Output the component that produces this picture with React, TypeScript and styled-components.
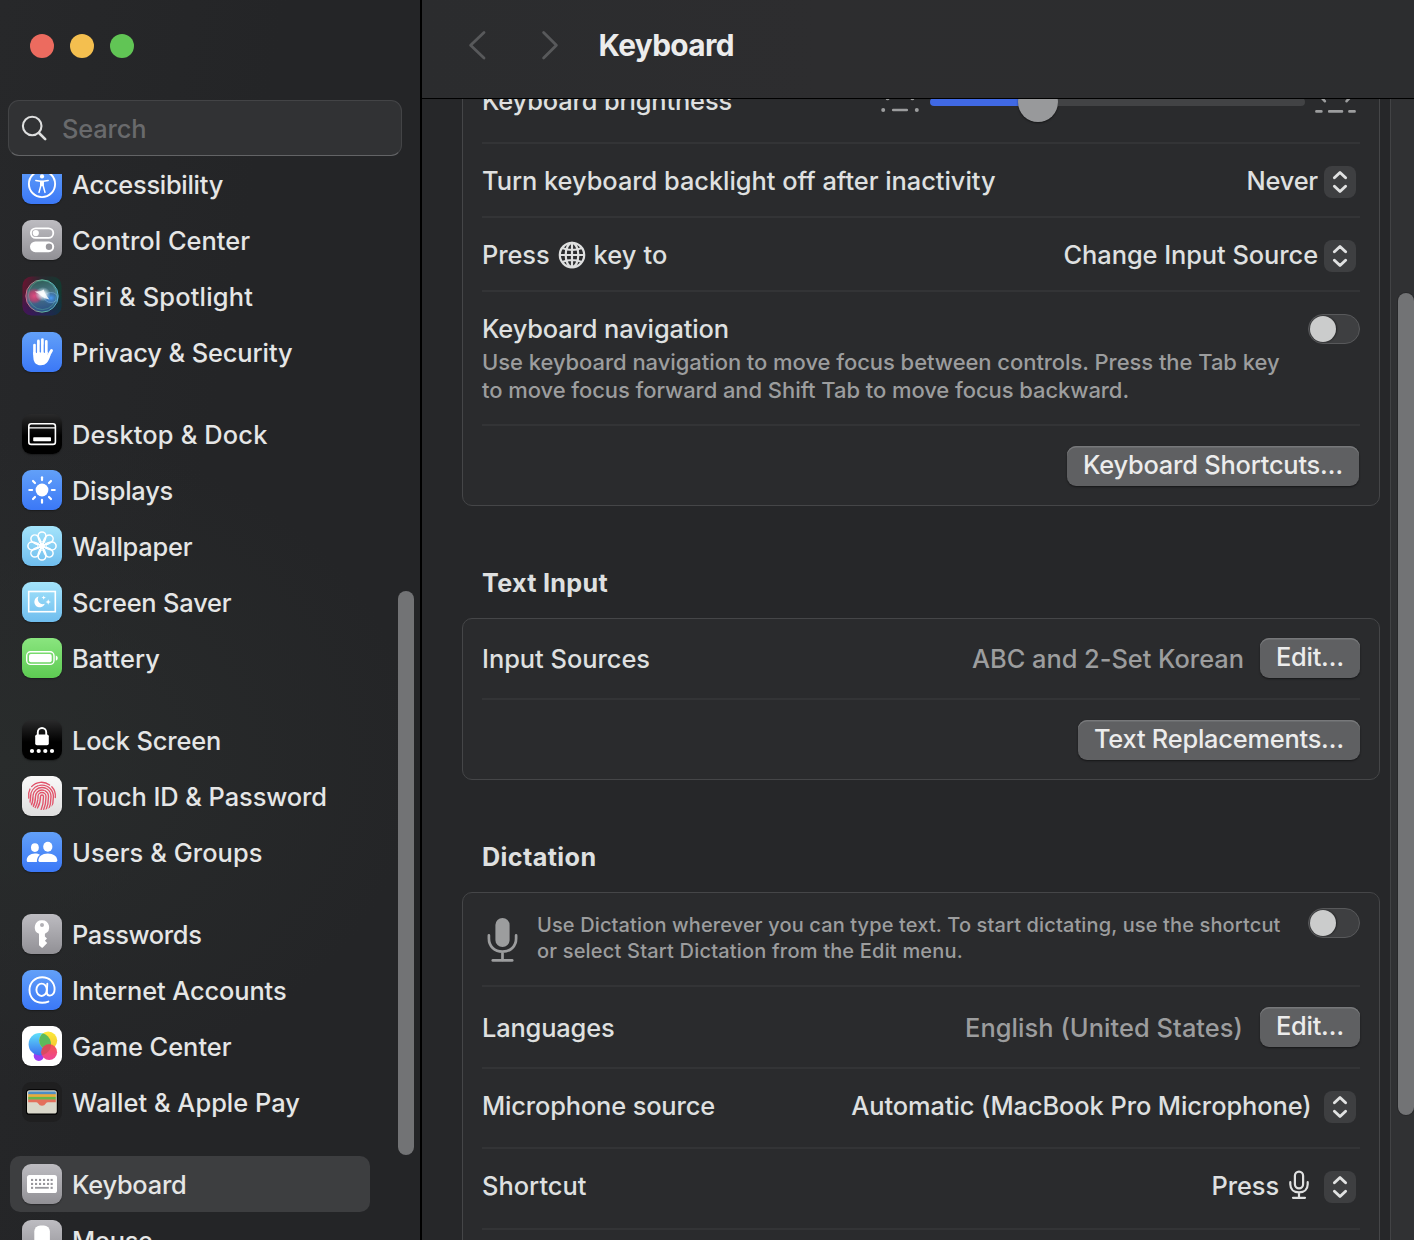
import React, { useLayoutEffect, useRef, useState } from "react";
import styled, { createGlobalStyle } from "styled-components";

const GlobalStyle = createGlobalStyle`
  * { box-sizing: border-box; }
  html, body { margin: 0; padding: 0; background: #262729; overflow: hidden; }
  body { font-family: Inter, "Liberation Sans", sans-serif; }
`;

const Window = styled.div`
  width: 1414px;
  height: 1240px;
  display: flex;
  overflow: hidden;
  background: #262729;
  color: #e1e2e2;
`;

/* ---------- text ---------- */

const TextBox = styled.span<{ $size: number; $weight: number; $color: string; $drop: number }>`
  display: block;
  flex: none;
  white-space: pre;
  font-size: ${(p) => p.$size}px;
  font-weight: ${(p) => p.$weight};
  line-height: 28px;
  color: ${(p) => p.$color};
  margin-top: ${(p) => p.$drop}px;
`;

type TextProps = {
  children: string;
  width: number;
  size?: number;
  weight?: number;
  color?: string;
  drop?: number;
};

/** A single line of text, tracked so that it spans the given width. */
function Text({ children, width, size = 25.4, weight = 480, color = "#dfe0e0", drop = 0 }: TextProps) {
  const ref = useRef<HTMLSpanElement>(null);
  const [tracking, setTracking] = useState(0);
  useLayoutEffect(() => {
    const range = document.createRange();
    range.selectNodeContents(ref.current!);
    const natural = range.getBoundingClientRect().width;
    setTracking((width - natural) / children.length);
  }, []);
  return (
    <TextBox ref={ref} $size={size} $weight={weight} $color={color} $drop={drop} style={{ letterSpacing: tracking }}>
      {children}
    </TextBox>
  );
}

/* ---------- sidebar ---------- */

const Sidebar = styled.aside`
  width: 422px;
  height: 100%;
  flex: none;
  display: flex;
  flex-direction: column;
  border-right: 2px solid #000;
  background: radial-gradient(ellipse 420px 330px at 0 760px, #292c2c 0%, rgba(41, 44, 44, 0) 100%),
    linear-gradient(100deg, #27282a 0%, #242527 45%, #242527 100%);
`;

const Lights = styled.div`
  display: flex;
  gap: 16px;
  padding: 34px 0 42px 30px;
`;

const Light = styled.span<{ $color: string }>`
  width: 24px;
  height: 24px;
  border-radius: 50%;
  background: ${(p) => p.$color};
`;

const Search = styled.div`
  flex: none;
  display: flex;
  align-items: center;
  gap: 13px;
  width: 394px;
  height: 56px;
  margin: 0 0 18px 8px;
  padding-left: 12px;
  border: 1px solid #434446;
  border-bottom-color: #636466;
  border-radius: 11px;
  background: #313234;
`;

const SidebarBody = styled.div`
  flex: 1;
  min-height: 0;
  display: flex;
  justify-content: space-between;
  overflow: hidden;
`;

const NavList = styled.nav`
  width: 360px;
  margin: -18px 0 0 10px;
  display: flex;
  flex-direction: column;
  gap: 26px;
`;

const NavGroup = styled.div`
  display: flex;
  flex-direction: column;
`;

const NavRow = styled.div<{ $active?: boolean }>`
  height: 56px;
  flex: none;
  display: flex;
  align-items: center;
  gap: 10px;
  padding-left: 12px;
  border-radius: 10px;
  background: ${(p) => (p.$active ? "#3d3e40" : "transparent")};
`;

const Tile = styled.span<{ $bg: string; $flat?: boolean }>`
  width: 40px;
  height: 40px;
  flex: none;
  display: flex;
  align-items: center;
  justify-content: center;
  overflow: hidden;
  border-radius: 9px;
  background: ${(p) => p.$bg};
  box-shadow: ${(p) => (p.$flat ? "none" : "0 1px 1.5px rgba(0, 0, 0, 0.35)")};
  & > svg { display: block; }
`;

const SidebarThumb = styled.div`
  width: 16px;
  height: 564px;
  margin: 417px 6px 0 0;
  border-radius: 8px;
  background: #727375;
`;

const Art = styled.svg.attrs({ viewBox: "0 0 40 40", width: 40, height: 40, fill: "none" })``;

const blue = "linear-gradient(#62a0f8, #3b78f7)";
const gray = "linear-gradient(#bdbcc1, #919095)";
const black = "linear-gradient(#2a2a2b, #000 55%)";
const sky = "linear-gradient(#a4e4fb, #6fbdee)";

const AccessibilityArt = () => (
  <Art stroke="#fff" strokeLinecap="round" strokeLinejoin="round">
    <circle cx="20" cy="20" r="13.1" strokeWidth="1.9" />
    <circle cx="20" cy="12.4" r="2.1" fill="#fff" stroke="none" />
    <path d="M13.8 16.4 L18.6 17.2 H21.4 L26.2 16.4" strokeWidth="1.5" />
    <path d="M21.1 17.4 V21.5 L23 28.4 M18.9 17.4 V21.5 L17 28.4" strokeWidth="1.5" />
    <path d="M18.9 17.4 H21.1 V21.6 H18.9 Z" fill="#fff" strokeWidth="1" />
  </Art>
);

const ControlCenterArt = () => (
  <Art>
    <rect x="8.9" y="8.3" width="22.4" height="9.6" rx="4.8" stroke="#fff" strokeWidth="1.8" />
    <circle cx="13.8" cy="13.1" r="3.1" fill="#fff" />
    <rect x="8" y="21.4" width="24.2" height="10.8" rx="5.4" fill="#fff" />
    <circle cx="27" cy="26.8" r="3.2" fill="#98979c" />
  </Art>
);

const SiriArt = () => (
  <Art>
    <defs>
      <linearGradient id="siriBg" x1="0" y1="0" x2="1" y2="0.25">
        <stop offset="0" stopColor="#6f1130" />
        <stop offset="0.45" stopColor="#2b2930" />
        <stop offset="1" stopColor="#133a30" />
      </linearGradient>
      <linearGradient id="siriLow" x1="0" y1="1" x2="1" y2="1">
        <stop offset="0" stopColor="#451260" />
        <stop offset="1" stopColor="#12304a" />
      </linearGradient>
      <linearGradient id="siriFade" x1="0" y1="0" x2="0" y2="1">
        <stop offset="0.4" stopColor="#fff" stopOpacity="0" />
        <stop offset="1" stopColor="#fff" />
      </linearGradient>
      <mask id="siriMask"><rect width="40" height="40" fill="url(#siriFade)" /></mask>
      <linearGradient id="siriOrb" x1="0.4" y1="0" x2="0.6" y2="1">
        <stop offset="0" stopColor="#2f6a60" />
        <stop offset="0.45" stopColor="#55869c" />
        <stop offset="1" stopColor="#2a5a94" />
      </linearGradient>
      <radialGradient id="siriPink">
        <stop offset="0" stopColor="#e04b80" />
        <stop offset="0.6" stopColor="#c93c6e" stopOpacity="0.75" />
        <stop offset="1" stopColor="#c8376e" stopOpacity="0" />
      </radialGradient>
      <radialGradient id="siriBlue">
        <stop offset="0" stopColor="#4a9cf5" />
        <stop offset="1" stopColor="#2f6fc8" stopOpacity="0" />
      </radialGradient>
      <radialGradient id="siriGlow">
        <stop offset="0" stopColor="#fff" />
        <stop offset="0.3" stopColor="#f2fbff" stopOpacity="0.85" />
        <stop offset="1" stopColor="#cfeeff" stopOpacity="0" />
      </radialGradient>
      <linearGradient id="siriRing" x1="0" y1="0.5" x2="1" y2="0.5">
        <stop offset="0" stopColor="#d4688c" />
        <stop offset="0.5" stopColor="#62b898" />
        <stop offset="1" stopColor="#5ab4d6" />
      </linearGradient>
    </defs>
    <rect x="0.5" y="0.5" width="39" height="39" rx="9" fill="url(#siriBg)" />
    <rect x="0.5" y="0.5" width="39" height="39" rx="9" fill="url(#siriLow)" mask="url(#siriMask)" />
    <circle cx="20" cy="20" r="16" fill="url(#siriOrb)" opacity="0.8" />
    <ellipse cx="12.5" cy="20" rx="8.5" ry="8" fill="url(#siriPink)" />
    <ellipse cx="29" cy="22" rx="8.5" ry="6.8" fill="url(#siriBlue)" />
    <circle cx="20" cy="20" r="16.2" stroke="url(#siriRing)" strokeWidth="1" />
    <ellipse cx="20.5" cy="19" rx="14" ry="14.6" stroke="#63c9a6" strokeOpacity="0.5" strokeWidth="0.8" />
    <ellipse cx="29" cy="21.5" rx="6.6" ry="5" stroke="#9fd2f5" strokeOpacity="0.5" strokeWidth="0.7" />
    <ellipse cx="20.8" cy="18.2" rx="7.8" ry="7.2" fill="url(#siriGlow)" />
    <path d="M12.5 15.4 Q19 16 21.8 13.6 Q22.4 17.4 27.4 23.6 Q21.6 22.4 18.8 19.6 Q16.6 17.2 12.5 15.4 Z" fill="#fff" opacity="0.8" />
  </Art>
);

const HandArt = () => (
  <Art stroke="#fff" strokeLinecap="round" strokeLinejoin="round">
    <path d="M12.5 13 V22 M16.4 8.9 V20 M20.4 7.5 V20 M24.3 9.4 V21" strokeWidth="2.7" />
    <path d="M29.5 18.6 L25.9 24.8" strokeWidth="2.9" />
    <path
      d="M11.2 20 H25.7 V24 L28.6 23 Q26.8 29 24.6 31 Q22.6 33.2 19 33.2 Q14.6 33.2 12.7 30.4 Q11.2 28.2 11.2 24 Z"
      fill="#fff"
      stroke="none"
    />
    <path d="M14.45 14 V20.6 M18.4 13 V20.2 M22.35 13 V20.6" stroke="#5791f8" strokeWidth="1" />
  </Art>
);

const DesktopArt = () => (
  <Art>
    <rect x="6.8" y="9.8" width="26.6" height="20.6" rx="2.4" stroke="#fff" strokeWidth="1.6" />
    <path d="M7 13.9 H33" stroke="#fff" strokeWidth="1.4" />
    <rect x="11.2" y="23.2" width="17.8" height="4" rx="0.8" fill="#fff" />
  </Art>
);

const spokes = [0, 45, 90, 135, 180, 225, 270, 315];

const SunArt = () => (
  <Art>
    <circle cx="20" cy="20" r="6.4" fill="#fff" />
    {spokes.map((a) => (
      <path key={a} d="M20 7.3 V10.1" stroke="#fff" strokeWidth="2.2" strokeLinecap="round" transform={`rotate(${a} 20 20)`} />
    ))}
  </Art>
);

const FlowerArt = () => (
  <Art stroke="#fff">
    {spokes.map((a) => (
      <path
        key={a}
        d="M20 18.6 C17.4 16 16.1 12.6 16.1 9.8 A3.9 3.9 0 0 1 23.9 9.8 C23.9 12.6 22.6 16 20 18.6 Z"
        strokeWidth="1.5"
        transform={`rotate(${a} 20 20)`}
      />
    ))}
    <circle cx="20" cy="20" r="4.6" strokeWidth="0.8" strokeOpacity="0.8" />
    <circle cx="20" cy="20" r="1.7" fill="#fff" stroke="none" />
  </Art>
);

const ScreenSaverArt = () => (
  <Art>
    <rect x="6.7" y="9.5" width="26.6" height="20.2" stroke="#fff" strokeWidth="1.6" />
    <path d="M16.6 14.6 A5.4 5.4 0 1 0 22.8 21.8 A5 5 0 0 1 16.6 14.6 Z" fill="#fff" />
    <path d="M21.7 13.4 L22.3 15 L23.9 15.6 L22.3 16.2 L21.7 17.8 L21.1 16.2 L19.5 15.6 L21.1 15 Z" fill="#fff" />
    <path d="M26.2 17.2 L27 19.2 L29 20 L27 20.8 L26.2 22.8 L25.4 20.8 L23.4 20 L25.4 19.2 Z" fill="#fff" />
  </Art>
);

const BatteryArt = () => (
  <Art>
    <rect x="4.7" y="13.8" width="27.3" height="12.6" rx="3.9" stroke="#fff" strokeWidth="1.4" />
    <rect x="7" y="16" width="22.7" height="8.2" rx="1.9" fill="#fff" />
    <path d="M33.8 17.4 Q35.8 18.2 35.8 20.1 Q35.8 22 33.8 22.8 Z" fill="#fff" />
  </Art>
);

const LockArt = () => (
  <Art>
    <path d="M15.8 15 V12.2 A4.2 4.2 0 0 1 24.2 12.2 V15" stroke="#fff" strokeWidth="1.9" />
    <rect x="13.2" y="14.4" width="13.6" height="10.9" rx="1.8" fill="#fff" />
    {[10, 16.7, 23.3, 30].map((x) => (
      <circle key={x} cx={x} cy="31" r="2.1" fill="#fff" />
    ))}
  </Art>
);

const ridges = [
  { r: 1.5, dash: "none" },
  { r: 4, dash: "9 1.2 40" },
  { r: 6.5, dash: "24 1.2 40" },
  { r: 9, dash: "12 1.2 17 1.2 40" },
  { r: 11.4, dash: "26 1.4 40" },
];

const FingerprintArt = () => (
  <Art stroke="#e2526a" strokeWidth="1.35" strokeLinecap="round">
    <clipPath id="printClip"><circle cx="20" cy="20" r="14" /></clipPath>
    <g clipPath="url(#printClip)">
      {ridges.map(({ r, dash }) => (
        <path
          key={r}
          strokeDasharray={dash}
          d={`M${17 - r} 32 Q${20 - r} 27 ${20 - r} 20.5 A${r} ${r} 0 0 1 ${20 + r} 20.5 Q${20 + r} 28.5 ${17.5 + r} 34`}
        />
      ))}
    </g>
    <path d="M9.6 10.6 A13.4 13.4 0 0 1 27.6 9 M29.8 10.8 A13.4 13.4 0 0 1 33.3 21.5 M8 13 A13.4 13.4 0 0 0 6.8 22" />
  </Art>
);

const UsersArt = () => (
  <Art>
    <ellipse cx="12.9" cy="15.6" rx="3.9" ry="4.3" fill="#fff" />
    <ellipse cx="25.8" cy="14.8" rx="4.6" ry="5" fill="#fff" />
    <path d="M4.7 28.4 C4.7 24.4 8 21.4 12.9 21.4 C15 21.4 16.6 21.9 18 22.8 C15.9 24.4 14.7 26.8 14.9 29.9 H6 Q4.7 29.9 4.7 28.4 Z" fill="#fff" />
    <path d="M16.4 28.6 C16.4 24.5 20.2 21.4 25.8 21.4 C31.4 21.4 35.3 24.5 35.3 28.6 Q35.3 29.9 34 29.9 H17.7 Q16.4 29.9 16.4 28.6 Z" fill="#fff" />
  </Art>
);

const KeyArt = () => (
  <Art>
    <path
      fillRule="evenodd"
      d="M20 6.2 A7.1 7.1 0 0 1 22.9 19.8 V22.4 L25 24.5 L22.9 26.7 L25.2 29 L20.6 33.8 H19.8 L17 31.2 V19.8 A7.1 7.1 0 0 1 20 6.2 Z M20 8.9 A2 2 0 1 0 20 12.9 A2 2 0 1 0 20 8.9 Z"
      fill="#fff"
    />
  </Art>
);

const AtArt = () => (
  <Art stroke="#fff" strokeWidth="1.9" strokeLinecap="round">
    <ellipse cx="19.6" cy="19.8" rx="5.2" ry="6.2" />
    <path d="M25.3 13.8 L24.8 22 Q24.8 25.6 27.8 25.6 Q32.6 25 32.6 19.2 C32.6 12.2 27.3 7.2 20.2 7.2 C12.8 7.2 7.5 12.6 7.5 20 C7.5 27.6 12.8 32.7 20.2 32.7 Q23.6 32.7 26.4 31.6" />
  </Art>
);

const GameCenterArt = () => (
  <Art>
    <defs>
      <linearGradient id="gcBlue" x1="0" y1="0" x2="0" y2="1">
        <stop offset="0" stopColor="#5fe0fa" />
        <stop offset="1" stopColor="#3a6fee" />
      </linearGradient>
      <linearGradient id="gcYellow" x1="0" y1="0" x2="0" y2="1">
        <stop offset="0" stopColor="#fbe93a" />
        <stop offset="1" stopColor="#f5c431" />
      </linearGradient>
      <linearGradient id="gcRed" x1="0" y1="0" x2="0" y2="1">
        <stop offset="0" stopColor="#f5574d" />
        <stop offset="1" stopColor="#ee4397" />
      </linearGradient>
      <clipPath id="gcClip"><circle cx="17.8" cy="18.2" r="11.2" /></clipPath>
    </defs>
    <circle cx="16.8" cy="29.8" r="5.1" fill="#9a3df2" />
    <circle cx="17.8" cy="18.2" r="11.2" fill="url(#gcBlue)" />
    <circle cx="26.2" cy="14.6" r="9" fill="url(#gcYellow)" />
    <circle cx="26.2" cy="14.6" r="9" fill="#5cba5c" clipPath="url(#gcClip)" />
    <circle cx="27.2" cy="26.2" r="7.9" fill="url(#gcRed)" />
    <circle cx="27.2" cy="26.2" r="7.9" fill="#cf4a5c" opacity="0.75" clipPath="url(#gcClip)" />
  </Art>
);

const WalletArt = () => (
  <Art>
    <rect x="4" y="7.2" width="31.8" height="25.6" rx="3.4" fill="#000" />
    <rect x="5" y="8.2" width="29.8" height="23.4" rx="2.6" fill="#dad8cb" />
    <rect x="6.2" y="9.6" width="27.6" height="3.4" rx="1" fill="#4d8dc4" />
    <rect x="6.2" y="12.2" width="27.6" height="3" fill="#e9ab3c" />
    <rect x="6.2" y="14.9" width="27.6" height="3" fill="#68b64a" />
    <path d="M6.2 17.4 H33.8 V20.2 H26 Q24.6 20.2 23.8 21.5 Q22.6 23.7 20 23.7 Q17.4 23.7 16.2 21.5 Q15.4 20.2 14 20.2 H6.2 Z" fill="#e4705d" />
  </Art>
);

const KeyboardArt = () => (
  <Art>
    <rect x="5" y="11" width="30" height="18" rx="2.6" fill="#fff" />
    {[15.9, 19.9].map((y) =>
      [9, 13, 17, 21, 25, 28.6].map((x) => <rect key={`${x}-${y}`} x={x} y={y - 1} width="2.1" height="2.1" fill="#98979c" />)
    )}
    <rect x="9" y="22.8" width="2.1" height="2.1" fill="#98979c" />
    <rect x="13" y="22.9" width="13.8" height="1.8" fill="#98979c" />
    <rect x="28.6" y="22.8" width="2.1" height="2.1" fill="#98979c" />
  </Art>
);

const MouseArt = () => (
  <Art>
    <rect x="12.3" y="5.4" width="15.6" height="29" rx="6" fill="#fff" />
  </Art>
);

type NavItem = { label: string; width: number; bg: string; art: React.ReactNode; flat?: boolean; active?: boolean };

const groups: NavItem[][] = [
  [
    { label: "Accessibility", width: 151, bg: blue, art: <AccessibilityArt /> },
    { label: "Control Center", width: 178, bg: gray, art: <ControlCenterArt /> },
    { label: "Siri & Spotlight", width: 181, bg: "transparent", art: <SiriArt />, flat: true },
    { label: "Privacy & Security", width: 220.5, bg: blue, art: <HandArt /> },
  ],
  [
    { label: "Desktop & Dock", width: 195.5, bg: black, art: <DesktopArt /> },
    { label: "Displays", width: 101, bg: blue, art: <SunArt /> },
    { label: "Wallpaper", width: 120.5, bg: sky, art: <FlowerArt /> },
    { label: "Screen Saver", width: 159.5, bg: sky, art: <ScreenSaverArt /> },
    { label: "Battery", width: 88, bg: "linear-gradient(#8ae57f, #5dcb52)", art: <BatteryArt /> },
  ],
  [
    { label: "Lock Screen", width: 149, bg: black, art: <LockArt /> },
    { label: "Touch ID & Password", width: 255, bg: "linear-gradient(#f9f9f9, #dedede)", art: <FingerprintArt /> },
    { label: "Users & Groups", width: 190.5, bg: blue, art: <UsersArt /> },
  ],
  [
    { label: "Passwords", width: 129.5, bg: gray, art: <KeyArt /> },
    { label: "Internet Accounts", width: 214.5, bg: blue, art: <AtArt /> },
    { label: "Game Center", width: 159.5, bg: "#fff", art: <GameCenterArt /> },
    { label: "Wallet & Apple Pay", width: 228, bg: "#1f1f20", art: <WalletArt />, flat: true },
  ],
  [
    { label: "Keyboard", width: 114.5, bg: gray, art: <KeyboardArt />, active: true },
    { label: "Mouse", width: 80.5, bg: gray, art: <MouseArt /> },
  ],
];

/* ---------- main pane ---------- */

const Main = styled.main`
  flex: 1;
  min-width: 0;
  display: flex;
  flex-direction: column;
`;

const Toolbar = styled.header`
  height: 99px;
  flex: none;
  display: flex;
  align-items: flex-start;
  padding: 30px 0 0 46px;
  border-bottom: 1px solid #000;
  background: linear-gradient(90deg, #2b2c2e, #2d2d2f 40%, #2c2d2f);
`;

const NavButtons = styled.div`
  display: flex;
  gap: 51px;
`;

const Title = styled.div`
  margin: 1px 0 0 35.5px;
`;

const Scroller = styled.div`
  flex: 1;
  min-height: 0;
  display: flex;
  overflow: hidden;
`;

const Content = styled.div`
  width: 968px;
  flex: none;
  padding-left: 40px;
  margin-top: -46px;
`;

const ScrollTrack = styled.div`
  flex: 1;
  padding: 194px 0 0 7px;
  border-left: 1px solid #424345;
  background: #303133;
`;

const ScrollThumb = styled.div`
  width: 16px;
  height: 822px;
  border-radius: 8px;
  background: #727375;
  box-shadow: 0 0 0 1px #28292b;
`;

const Card = styled.section`
  width: 918px;
  padding: 0 19px;
  border: 1px solid #454648;
  border-radius: 10px;
  background: #2a2b2d;
`;

const Heading = styled.div<{ $height: number }>`
  height: ${(p) => p.$height}px;
  padding: 0 0 21px 20px;
  display: flex;
  align-items: flex-end;
`;

const Row = styled.div<{ $height: number; $last?: boolean; $align?: string; $top?: number; $bottom?: number }>`
  height: ${(p) => p.$height}px;
  display: flex;
  align-items: ${(p) => p.$align ?? "center"};
  justify-content: space-between;
  padding-top: ${(p) => p.$top ?? 0}px;
  padding-bottom: ${(p) => p.$bottom ?? 0}px;
  border-bottom: ${(p) => (p.$last ? "none" : "2px solid #333436")};
`;

const Side = styled.div<{ $gap?: number; $right?: number; $left?: number; $top?: number }>`
  display: flex;
  align-items: center;
  gap: ${(p) => p.$gap ?? 6}px;
  margin-top: ${(p) => p.$top ?? 0}px;
  margin-left: ${(p) => p.$left ?? 0}px;
  margin-right: ${(p) => p.$right ?? 0}px;
`;

const Paragraph = styled.div<{ $line: number; $top?: number }>`
  display: flex;
  flex-direction: column;
  margin-top: ${(p) => p.$top ?? 0}px;
  & > span { line-height: ${(p) => p.$line}px; }
`;

const StepBox = styled.span<{ $left?: number }>`
  width: 32px;
  height: 32px;
  flex: none;
  display: flex;
  align-items: center;
  justify-content: center;
  margin-top: 2px;
  margin-left: ${(p) => p.$left ?? 0}px;
  border-radius: 8px;
  background: #3e3f41;
`;

const PushButton = styled.span<{ $width: number }>`
  width: ${(p) => p.$width}px;
  height: 40px;
  flex: none;
  display: flex;
  align-items: center;
  justify-content: center;
  padding-bottom: 2px;
  border-radius: 9px;
  background: #5f6062;
  box-shadow: inset 0 1.5px 0 #77787a, 0 1px 2px rgba(0, 0, 0, 0.5);
`;

const Switch = styled.span`
  width: 52px;
  height: 30px;
  flex: none;
  display: flex;
  padding: 1px;
  border: 1px solid #58595b;
  border-radius: 15px;
  background: #3e3f41;
`;

const Knob = styled.span`
  width: 26px;
  height: 26px;
  border-radius: 50%;
  background: #cbcccc;
  box-shadow: 1px 0 2px rgba(0, 0, 0, 0.45);
`;

const Slider = styled.span`
  width: 375px;
  height: 40px;
  display: flex;
  align-items: center;
`;

const SliderFill = styled.span`
  width: 96px;
  height: 8px;
  margin-right: -8px;
  border-radius: 4px 0 0 4px;
  background: #4069e4;
`;

const SliderKnob = styled.span`
  width: 40px;
  height: 40px;
  flex: none;
  border-radius: 50%;
  background: #98999b;
  box-shadow: 0 1px 2px rgba(0, 0, 0, 0.5);
`;

const SliderRest = styled.span`
  flex: 1;
  height: 8px;
  border-radius: 0 4px 4px 0;
  background: #424345;
`;

const Chevron = ({ d }: { d: string }) => (
  <svg width="22" height="32" viewBox="0 0 22 32" fill="none" stroke="#58595b" strokeWidth="2.8" strokeLinecap="round" strokeLinejoin="round">
    <path d={d} />
  </svg>
);

const Stepper = ({ left }: { left?: number }) => (
  <StepBox $left={left}>
    <svg width="32" height="32" viewBox="0 0 32 32" fill="none" stroke="#e1e2e2" strokeWidth="2.9" strokeLinecap="round" strokeLinejoin="round">
      <path d="M10.4 11.8 L16 6.5 L21.6 11.8 M10.4 20.2 L16 25.5 L21.6 20.2" />
    </svg>
  </StepBox>
);

const Toggle = () => (
  <Switch>
    <Knob />
  </Switch>
);

const Globe = () => (
  <svg width="28" height="28" viewBox="0 0 28 28" fill="none" stroke="#dfe0e0" strokeWidth="2.2">
    <circle cx="14" cy="14" r="12.2" />
    <ellipse cx="14" cy="14" rx="6.3" ry="12.2" />
    <path d="M14 1.8 V26.2 M1.8 14 H26.2 M4.2 7 Q14 11 23.8 7 M4.2 21 Q14 17 23.8 21" />
  </svg>
);

const MicFilled = () => (
  <svg width="32" height="50" viewBox="0 -4 32 50" fill="none" stroke="#9c9d9e" strokeLinecap="round">
    <rect x="9.4" y="1" width="14.2" height="29" rx="7.1" fill="#9c9d9e" stroke="none" />
    <path d="M2.9 18.4 V21.6 C2.9 29.4 8.5 34.7 16.5 34.7 C24.5 34.7 30.1 29.4 30.1 21.6 V18.4 M16.5 34.7 V43" strokeWidth="2.7" />
    <path d="M6.9 43.4 H26.1" strokeWidth="2.9" />
  </svg>
);

const MicOutline = () => (
  <svg width="20" height="32" viewBox="0 0 20 32" fill="none" stroke="#dfe0e0" strokeWidth="2.2" strokeLinecap="round">
    <rect x="5.9" y="1.6" width="8.2" height="16.8" rx="4.1" />
    <path d="M1.3 12.2 V14.3 C1.3 19.2 4.8 22.4 10 22.4 C15.2 22.4 18.7 19.2 18.7 14.3 V12.2 M10 22.4 V27.6 M4 27.8 H16" />
  </svg>
);

const DimKeys = () => (
  <svg width="42" height="30" viewBox="0 -1 42 30" fill="none" stroke="#9c9d9e" strokeLinecap="round">
    <path d="M14.2 22 H27.8" strokeWidth="2.6" />
    <g fill="#9c9d9e" stroke="none">
      <circle cx="4.2" cy="22" r="2" />
      <circle cx="37.8" cy="22" r="2" />
      <circle cx="8.6" cy="10.2" r="2" />
      <circle cx="33.4" cy="10.2" r="2" />
      <circle cx="21" cy="5" r="2" />
    </g>
  </svg>
);

const BrightKeys = () => (
  <svg width="44" height="28" viewBox="0 0 44 28" fill="none" stroke="#9c9d9e" strokeWidth="2.6" strokeLinecap="round">
    <path d="M2.4 23.4 H7.4 M15.2 23.4 H28 M35.4 23.4 H40.6 M7.4 9.4 L10.8 13.2 M36 9.4 L32.6 13.2 M21.6 2 V7" />
  </svg>
);

const dim = "#9c9d9e";

export default function App() {
  return (
    <>
      <GlobalStyle />
      <Window>
        <Sidebar>
          <Lights>
            <Light $color="#ec6b5f" />
            <Light $color="#f4bf4f" />
            <Light $color="#61c555" />
          </Lights>
          <Search>
            <svg width="28" height="28" viewBox="0 0 28 28" fill="none" stroke="#dedfdf" strokeLinecap="round">
              <circle cx="11.2" cy="12" r="9.3" strokeWidth="2.1" />
              <path d="M18 19 L24.2 25.2" strokeWidth="2.6" />
            </svg>
            <Text width={84.5} color="#696a6c" drop={1}>Search</Text>
          </Search>
          <SidebarBody>
            <NavList>
              {groups.map((items, i) => (
                <NavGroup key={i}>
                  {items.map((item) => (
                    <NavRow key={item.label} $active={item.active}>
                      <Tile $bg={item.bg} $flat={item.flat}>{item.art}</Tile>
                      <Text width={item.width} color="#e5e6e6" drop={1}>{item.label}</Text>
                    </NavRow>
                  ))}
                </NavGroup>
              ))}
            </NavList>
            <SidebarThumb />
          </SidebarBody>
        </Sidebar>

        <Main>
          <Toolbar>
            <NavButtons>
              <Chevron d="M16 2.4 L2.6 15.2 L16 28" />
              <Chevron d="M2.6 2.4 L15.4 15.2 L2.6 28" />
            </NavButtons>
            <Title>
              <Text width={135.5} size={29.8} weight={700} color="#ececec">Keyboard</Text>
            </Title>
          </Toolbar>
          <Scroller>
            <Content>
              <Card>
                <Row $height={90} $top={8}>
                  <Text width={250} drop={-2}>Keyboard brightness</Text>
                  <Side $gap={9} $right={2}>
                    <DimKeys />
                    <Slider>
                      <SliderFill />
                      <SliderKnob />
                      <SliderRest />
                    </Slider>
                    <BrightKeys />
                  </Side>
                </Row>
                <Row $height={74} $top={2}>
                  <Text width={513.5}>Turn keyboard backlight off after inactivity</Text>
                  <Side $right={4}>
                    <Text width={71.5}>Never</Text>
                    <Stepper />
                  </Side>
                </Row>
                <Row $height={74} $top={2}>
                  <Side $gap={8}>
                    <Text width={67.5}>Press</Text>
                    <Globe />
                    <Text width={74}>key to</Text>
                  </Side>
                  <Side $right={4}>
                    <Text width={254.5}>Change Input Source</Text>
                    <Stepper />
                  </Side>
                </Row>
                <Row $height={134} $top={22} $align="flex-start">
                  <div>
                    <Text width={247} drop={1}>Keyboard navigation</Text>
                    <Paragraph $line={28} $top={5}>
                      <Text width={797.5} size={22} color={dim}>Use keyboard navigation to move focus between controls. Press the Tab key</Text>
                      <Text width={647} size={22} color={dim}>to move focus forward and Shift Tab to move focus backward.</Text>
                    </Paragraph>
                  </div>
                  <Toggle />
                </Row>
                <Row $height={79} $last>
                  <span />
                  <Side $right={1}>
                    <PushButton $width={292}>
                      <Text width={260} color="#ececec">Keyboard Shortcuts…</Text>
                    </PushButton>
                  </Side>
                </Row>
              </Card>

              <Heading $height={112}>
                <Text width={126} size={25.2} weight={650}>Text Input</Text>
              </Heading>
              <Card>
                <Row $height={81} $bottom={1}>
                  <Text width={168} drop={2}>Input Sources</Text>
                  <Side $gap={16}>
                    <Text width={272} color={dim} drop={2}>ABC and 2-Set Korean</Text>
                    <PushButton $width={100}>
                      <Text width={68} color="#ececec">Edit…</Text>
                    </PushButton>
                  </Side>
                </Row>
                <Row $height={79} $last>
                  <span />
                  <PushButton $width={282}>
                    <Text width={250} color="#ececec">Text Replacements…</Text>
                  </PushButton>
                </Row>
              </Card>

              <Heading $height={112}>
                <Text width={114.5} size={25.2} weight={650}>Dictation</Text>
              </Heading>
              <Card>
                <Row $height={94} $top={15} $align="flex-start">
                  <Side $gap={19} $left={4} $top={4}>
                    <MicFilled />
                    <Paragraph $line={26}>
                      <Text width={743.5} size={20} color={dim}>Use Dictation wherever you can type text. To start dictating, use the shortcut</Text>
                      <Text width={426} size={20} color={dim}>or select Start Dictation from the Edit menu.</Text>
                    </Paragraph>
                  </Side>
                  <Toggle />
                </Row>
                <Row $height={82}>
                  <Text width={132.5} drop={2}>Languages</Text>
                  <Side $gap={17}>
                    <Text width={278} color={dim} drop={2}>English (United States)</Text>
                    <PushButton $width={100}>
                      <Text width={68} color="#ececec">Edit…</Text>
                    </PushButton>
                  </Side>
                </Row>
                <Row $height={80} $bottom={4}>
                  <Text width={233}>Microphone source</Text>
                  <Side $gap={12.5} $right={4}>
                    <Text width={460}>Automatic (MacBook Pro Microphone)</Text>
                    <Stepper />
                  </Side>
                </Row>
                <Row $height={81} $bottom={5}>
                  <Text width={104.5}>Shortcut</Text>
                  <Side $gap={10} $right={4}>
                    <Text width={67.5}>Press</Text>
                    <MicOutline />
                    <Stepper left={5} />
                  </Side>
                </Row>
                <Row $height={80} $last />
              </Card>
            </Content>
            <ScrollTrack>
              <ScrollThumb />
            </ScrollTrack>
          </Scroller>
        </Main>
      </Window>
    </>
  );
}
